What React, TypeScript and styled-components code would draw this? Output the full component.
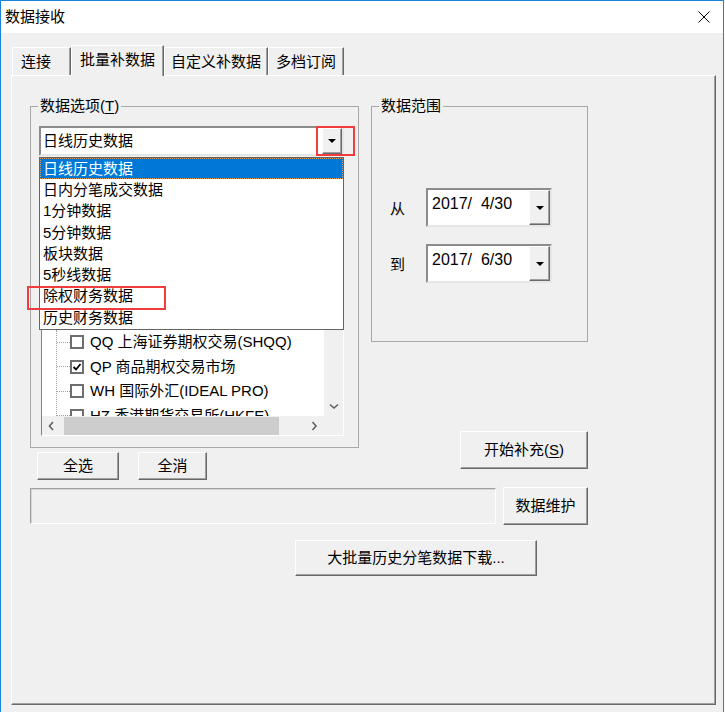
import React from 'react';
import styled, { createGlobalStyle } from 'styled-components';

const FONT = `"Liberation Sans", "Noto Sans CJK SC", sans-serif`;

const GlobalStyle = createGlobalStyle`
  html, body {
    margin: 0;
    padding: 0;
    background: #ffffff;
  }
  body {
    font-family: ${FONT};
    font-size: 15px;
    color: #000;
  }
  * {
    box-sizing: border-box;
  }
`;

const Window = styled.div`
  width: 724px;
  height: 712px;
  display: flex;
  flex-direction: column;
  border: 1px solid #1883d7;
  border-bottom: none;
  background: #f0f0f0;
`;

const TitleBar = styled.div`
  flex: none;
  height: 32px;
  background: #ffffff;
  display: flex;
  align-items: center;
  justify-content: space-between;
  padding: 0 13px 0 4px;
  font-size: 15px;
  line-height: 20px;
`;

const Body = styled.div`
  flex: 1;
  padding: 12px 0 0 10px;
`;

const TabStrip = styled.div`
  display: flex;
  align-items: flex-end;
  height: 30px;
  padding-left: 1px;
`;

const Tab = styled.div<{ $active?: boolean; $w: number; $pl: number }>`
  position: relative;
  z-index: ${({ $active }) => ($active ? 2 : 1)};
  width: ${({ $w }) => $w}px;
  height: ${({ $active }) => ($active ? 31 : 28)}px;
  margin-bottom: ${({ $active }) => ($active ? -1 : 0)}px;
  padding: 0 0 ${({ $active }) => ($active ? 3 : 0)}px ${({ $pl }) => $pl}px;
  display: flex;
  align-items: center;
  background: #f0f0f0;
  border-top: 1px solid #ffffff;
  border-left: 1px solid #ffffff;
  border-right: 1px solid #696969;
  box-shadow: inset -1px 0 0 #a0a0a0;
  font-size: 15px;
  line-height: 20px;
  white-space: nowrap;
`;

const Panel = styled.div`
  width: 705px;
  height: 630px;
  border: 1px solid;
  border-color: #ffffff #696969 #696969 #ffffff;
  box-shadow: inset -1px -1px 0 #a0a0a0;
  padding: 20px 0 0 18px;
`;

const TopArea = styled.div`
  display: flex;
  align-items: flex-start;
`;

const Column = styled.div<{ $w: number; $ml?: number }>`
  width: ${({ $w }) => $w}px;
  margin-left: ${({ $ml }) => $ml || 0}px;
  display: flex;
  flex-direction: column;
`;

const Group = styled.fieldset<{ $pb: number }>`
  margin: 0;
  min-width: 0;
  padding: 0 0 ${({ $pb }) => $pb}px 0;
  border: 1px solid #a8a8a8;
`;

const Legend = styled.legend`
  margin-left: 7px;
  padding: 0 2px;
  font-size: 15px;
  line-height: 20px;
`;

const Key = styled.span`
  text-decoration: underline;
  text-underline-offset: 2px;
`;

/* ---------- combo box with its open list ---------- */

const ComboWrap = styled.div`
  position: relative;
  width: 305px;
  height: 30px;
  margin: 10px 0 0 8px;
`;

const Sunken = styled.div`
  display: flex;
  background: #ffffff;
  border: 2px solid;
  border-color: #8c8c8c #e6e6e6 #e6e6e6 #8c8c8c;
`;

const Combo = styled(Sunken)`
  height: 30px;
  padding: 0 0 0 2px;
  align-items: stretch;
`;

const FieldText = styled.div<{ $top?: number; $size?: number }>`
  flex: 1;
  padding-top: ${({ $top }) => $top || 0}px;
  font-size: ${({ $size }) => $size || 15}px;
  line-height: 26px;
  white-space: pre;
`;

const DropButton = styled.div<{ $w: number }>`
  flex: none;
  width: ${({ $w }) => $w}px;
  display: flex;
  align-items: center;
  justify-content: center;
  background: #f0f0f0;
  border: 1px solid;
  border-color: #ffffff #696969 #696969 #ffffff;
  box-shadow: inset -1px -1px 0 #a0a0a0;
`;

const Caret = styled.span`
  width: 0;
  height: 0;
  border-left: 4px solid transparent;
  border-right: 4px solid transparent;
  border-top: 4px solid #000000;
`;

const DropList = styled.div`
  position: absolute;
  z-index: 5;
  top: 31px;
  left: 0;
  width: 305px;
  height: 173px;
  background: #ffffff;
  border: 1px solid #646464;
`;

const DropItem = styled.div<{ $selected?: boolean }>`
  height: 21.3px;
  padding-left: 3px;
  display: flex;
  align-items: center;
  font-size: 15px;
  line-height: 20px;
  white-space: nowrap;
  color: ${({ $selected }) => ($selected ? '#ffffff' : '#000000')};
  background: ${({ $selected }) => ($selected ? '#0078d7' : 'transparent')};
  outline: ${({ $selected }) => ($selected ? '1px dotted #e39a4c' : 'none')};
  outline-offset: -1px;
`;

const Callout = styled.div<{ $l: number; $t: number; $w: number; $h: number }>`
  position: absolute;
  z-index: 6;
  left: ${({ $l }) => $l}px;
  top: ${({ $t }) => $t}px;
  width: ${({ $w }) => $w}px;
  height: ${({ $h }) => $h}px;
  border: 2px solid #f03c3c;
  pointer-events: none;
`;

/* ---------- market tree under the list ---------- */

const TreeBox = styled.div`
  width: 303px;
  height: 271px;
  margin: 9px 0 0 10px;
  display: grid;
  grid-template-columns: 1fr 19px;
  grid-template-rows: 1fr 19px;
  border: 1px solid;
  border-color: #828282 #ffffff #ffffff #828282;
  background: #ffffff;
`;

const TreeBody = styled.div`
  overflow: hidden;
  background: #ffffff;
  padding: 164px 0 0 14px;
`;

const TreeRows = styled.div`
  border-left: 1px dotted #a0a0a0;
  height: 200px;
`;

const TreeRow = styled.div`
  height: 24.5px;
  display: flex;
  align-items: center;
`;

const Connector = styled.span`
  width: 13px;
  height: 0;
  border-top: 1px dotted #a0a0a0;
`;

const CheckBox = styled.span`
  flex: none;
  width: 14px;
  height: 14px;
  display: flex;
  align-items: center;
  justify-content: center;
  background: #ffffff;
  border: 2px solid #6e6e6e;
`;

const TreeLabel = styled.span`
  margin-left: 6px;
  font-size: 15px;
  line-height: 20px;
  white-space: nowrap;
`;

const VScroll = styled.div`
  background: #f0f0f0;
  display: flex;
  flex-direction: column;
  justify-content: flex-end;
  align-items: center;
  padding-bottom: 6px;
`;

const HScroll = styled.div`
  background: #f0f0f0;
  display: flex;
  align-items: center;
`;

const ScrollArrow = styled.div`
  width: 19px;
  height: 18px;
  flex: none;
  display: flex;
  align-items: center;
  justify-content: center;
`;

const Thumb = styled.div`
  width: 215px;
  height: 18px;
  margin-left: 3px;
  background: #cdcdcd;
`;

const Spacer = styled.div`
  flex: 1;
`;

const Corner = styled.div`
  background: #f0f0f0;
`;

/* ---------- date range ---------- */

const DateRow = styled.div<{ $mt: number }>`
  display: flex;
  align-items: center;
  margin-top: ${({ $mt }) => $mt}px;
  padding-left: 18px;
`;

const DateLabel = styled.span`
  width: 36px;
  padding-top: 3px;
  font-size: 15px;
  line-height: 20px;
`;

const DatePicker = styled(Sunken)`
  width: 126px;
  height: 39px;
  padding-left: 4px;
`;

/* ---------- buttons and fields ---------- */

const Button = styled.button<{ $w: number; $h: number; $ml?: number }>`
  flex: none;
  width: ${({ $w }) => $w}px;
  height: ${({ $h }) => $h}px;
  margin: 0 0 0 ${({ $ml }) => $ml || 0}px;
  padding: 0;
  font-family: ${FONT};
  font-size: 15px;
  line-height: 20px;
  color: #000000;
  background: #f0f0f0;
  border: 1px solid;
  border-color: #ffffff #696969 #696969 #ffffff;
  box-shadow: inset -1px -1px 0 #a0a0a0;
`;

const ButtonRow = styled.div<{ $mt: number }>`
  display: flex;
  align-items: center;
  margin-top: ${({ $mt }) => $mt}px;
`;

const StatusField = styled.div`
  width: 466px;
  height: 36px;
  background: #f0f0f0;
  border: 1px solid;
  border-color: #a0a0a0 #ffffff #ffffff #a0a0a0;
  box-shadow: inset 1px 1px 0 #d6d6d6;
`;

const StartButton = styled(Button)`
  align-self: flex-end;
  margin-top: 89px;
`;

const Chevron = ({ dir }: { dir: 'left' | 'right' | 'down' }) => {
  const pts = {
    left: '5,1 1.5,5 5,9',
    right: '1.5,1 5,5 1.5,9',
    down: '1,1.5 5,5 9,1.5',
  }[dir];
  const w = dir === 'down' ? 10 : 7;
  const h = dir === 'down' ? 7 : 10;
  return (
    <svg width={w} height={h} viewBox={`0 0 ${w} ${h}`}>
      <polyline points={pts} fill="none" stroke="#606060" strokeWidth="1.6" />
    </svg>
  );
};

const CloseIcon = () => (
  <svg width="12" height="12" viewBox="0 0 12 12">
    <path d="M0.5 0.5 L11.5 11.5 M11.5 0.5 L0.5 11.5" stroke="#000" strokeWidth="1" />
  </svg>
);

const Tick = () => (
  <svg width="10" height="10" viewBox="0 0 10 10">
    <polyline points="1.5,5 4,7.5 8.5,2" fill="none" stroke="#000" strokeWidth="1.8" />
  </svg>
);

const listItems = ['日线历史数据', '日内分笔成交数据', '1分钟数据', '5分钟数据', '板块数据', '5秒线数据', '除权财务数据', '历史财务数据'];

const markets = [
  { label: 'QQ 上海证券期权交易(SHQQ)', checked: false },
  { label: 'QP 商品期权交易市场', checked: true },
  { label: 'WH 国际外汇(IDEAL PRO)', checked: false },
  { label: 'HZ 香港期货交易所(HKFE)', checked: false },
];

export default function App() {
  return (
    <>
      <GlobalStyle />
      <Window>
        <TitleBar>
          <span>数据接收</span>
          <CloseIcon />
        </TitleBar>
        <Body>
          <TabStrip>
            <Tab $w={59} $pl={8}>连接</Tab>
            <Tab $active $w={93} $pl={8}>批量补数据</Tab>
            <Tab $w={104} $pl={6}>自定义补数据</Tab>
            <Tab $w={76} $pl={7}>多档订阅</Tab>
          </TabStrip>
          <Panel>
            <TopArea>
              <Column $w={329}>
                <Group $pb={11}>
                  <Legend>
                    数据选项(<Key>T</Key>)
                  </Legend>
                  <ComboWrap>
                    <Combo>
                      <FieldText>日线历史数据</FieldText>
                      <DropButton $w={20}>
                        <Caret />
                      </DropButton>
                    </Combo>
                    <Callout $l={277} $t={0} $w={39} $h={30} />
                    <DropList>
                      {listItems.map((item, i) => (
                        <DropItem key={item} $selected={i === 0}>
                          {item}
                        </DropItem>
                      ))}
                      <Callout $l={-13} $t={128} $w={139} $h={24} />
                    </DropList>
                  </ComboWrap>
                  <TreeBox>
                    <TreeBody>
                      <TreeRows>
                        {markets.map((m) => (
                          <TreeRow key={m.label}>
                            <Connector />
                            <CheckBox>{m.checked && <Tick />}</CheckBox>
                            <TreeLabel>{m.label}</TreeLabel>
                          </TreeRow>
                        ))}
                      </TreeRows>
                    </TreeBody>
                    <VScroll>
                      <Chevron dir="down" />
                    </VScroll>
                    <HScroll>
                      <ScrollArrow>
                        <Chevron dir="left" />
                      </ScrollArrow>
                      <Thumb />
                      <Spacer />
                      <ScrollArrow>
                        <Chevron dir="right" />
                      </ScrollArrow>
                    </HScroll>
                    <Corner />
                  </TreeBox>
                </Group>
                <ButtonRow $mt={4}>
                  <Button $w={82} $h={28} $ml={7}>全选</Button>
                  <Button $w={69} $h={28} $ml={19}>全消</Button>
                </ButtonRow>
              </Column>
              <Column $w={217} $ml={12}>
                <Group $pb={58}>
                  <Legend>数据范围</Legend>
                  <DateRow $mt={72}>
                    <DateLabel>从</DateLabel>
                    <DatePicker>
                      <FieldText $top={1} $size={16}>{'2017/  4/30'}</FieldText>
                      <DropButton $w={21}>
                        <Caret />
                      </DropButton>
                    </DatePicker>
                  </DateRow>
                  <DateRow $mt={17}>
                    <DateLabel>到</DateLabel>
                    <DatePicker>
                      <FieldText $top={1} $size={16}>{'2017/  6/30'}</FieldText>
                      <DropButton $w={21}>
                        <Caret />
                      </DropButton>
                    </DatePicker>
                  </DateRow>
                </Group>
                <StartButton $w={128} $h={38}>
                  开始补充(<Key>S</Key>)
                </StartButton>
              </Column>
            </TopArea>
            <ButtonRow $mt={7}>
              <StatusField />
              <Button $w={85} $h={38} $ml={7}>数据维护</Button>
            </ButtonRow>
            <ButtonRow $mt={15}>
              <Button $w={242} $h={36} $ml={265}>大批量历史分笔数据下载...</Button>
            </ButtonRow>
          </Panel>
        </Body>
      </Window>
    </>
  );
}
